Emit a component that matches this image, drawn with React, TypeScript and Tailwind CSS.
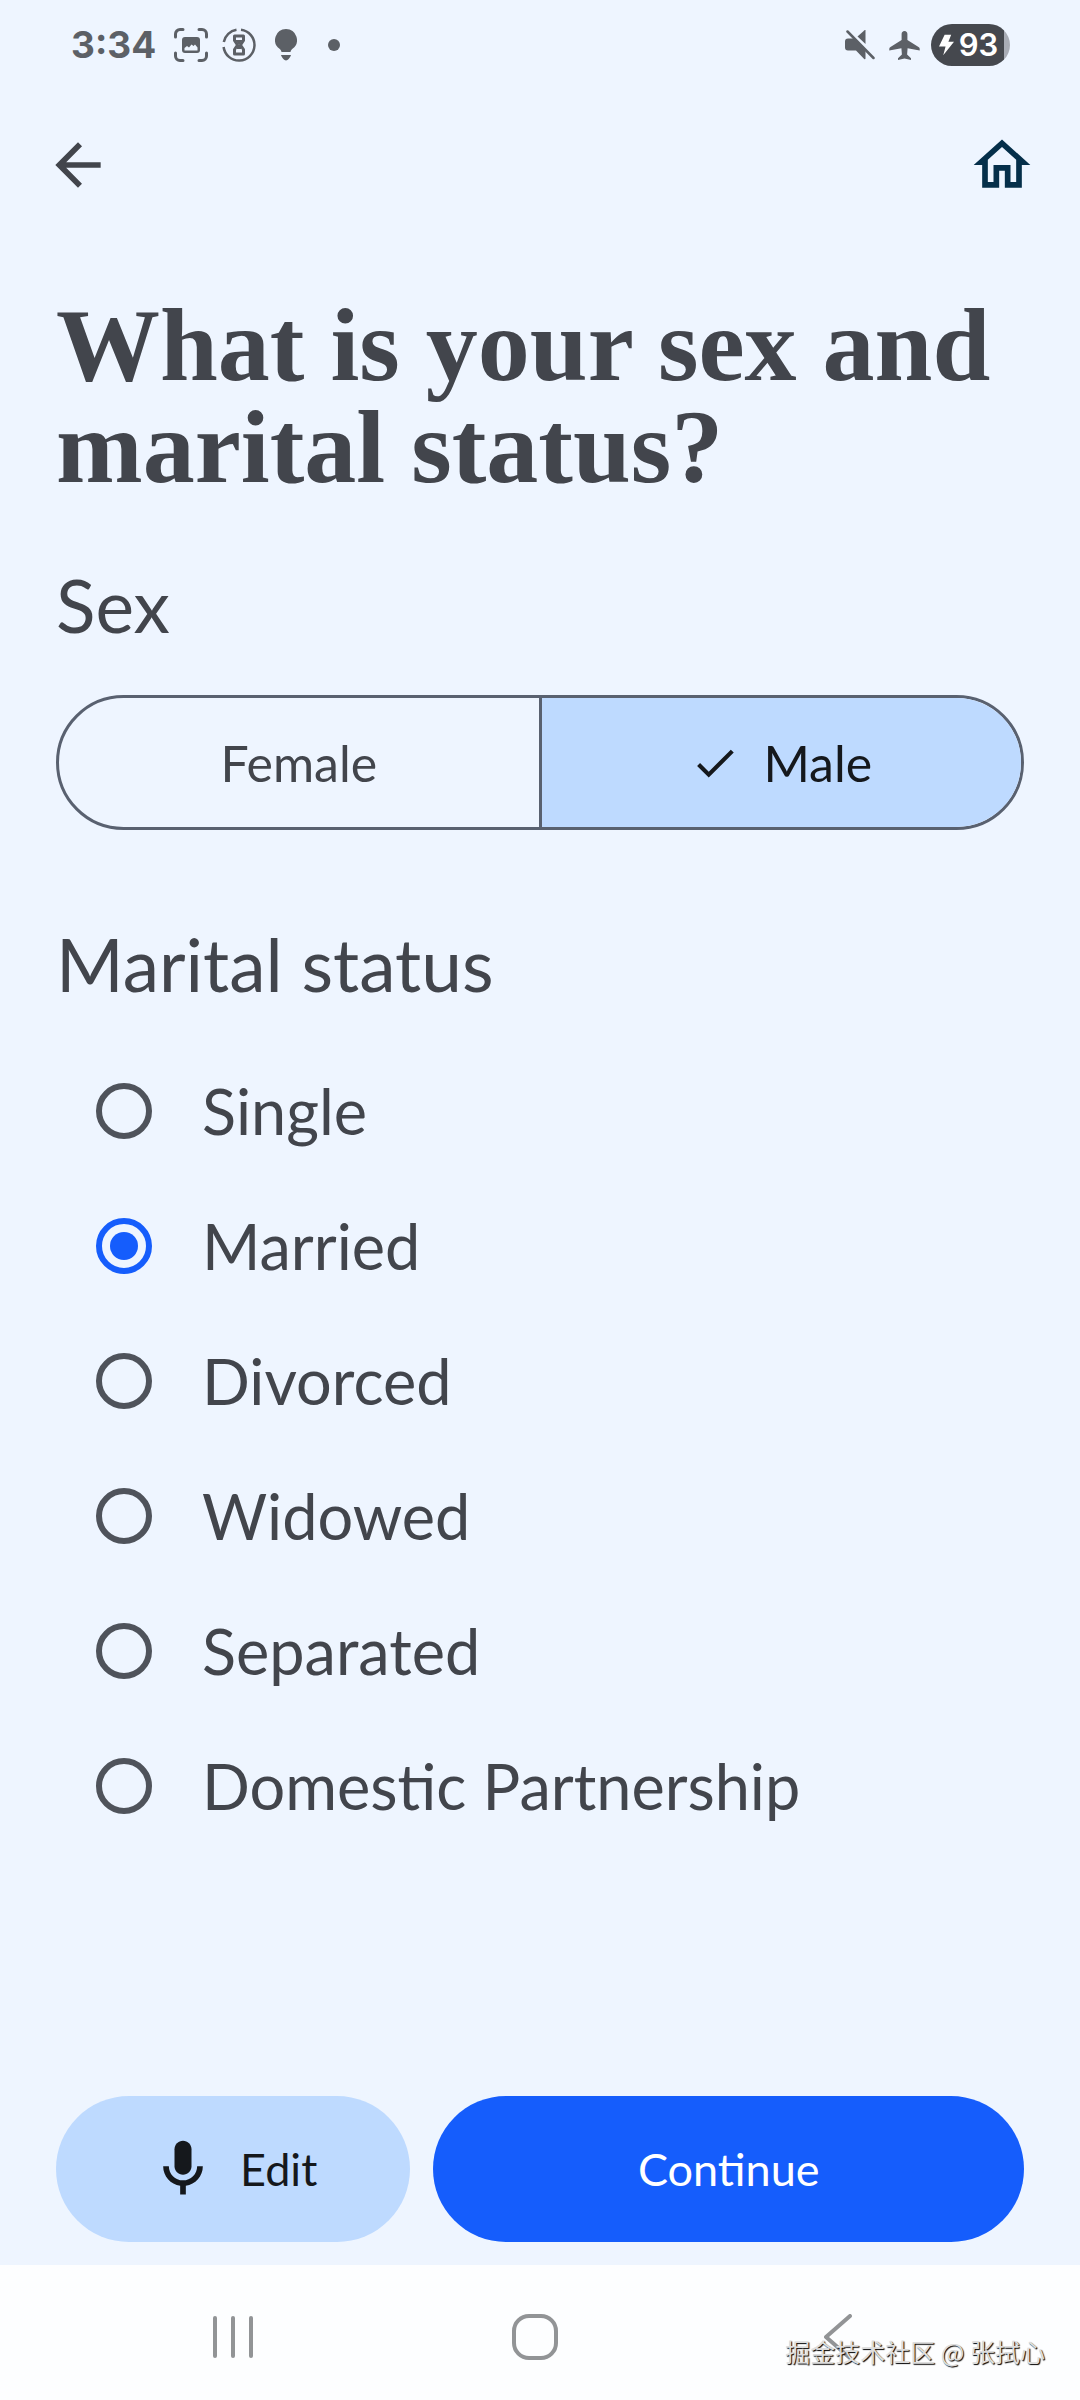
import { useState } from "react";

const maritalOptions = ["Single", "Married", "Divorced", "Widowed", "Separated", "Domestic Partnership"];

function StatusBar() {
  return (
    <div className="flex h-[90px] items-center justify-between pr-[70px] pl-[71px] font-['Inter'] text-[#5c6066]">
      <div className="flex items-center">
        <span className="text-[37px] leading-[46px] font-bold">3:34</span>
        <svg className="ml-[18px] size-[34px]" viewBox="0 0 34 34" fill="none" stroke="currentColor" strokeWidth="3" strokeLinecap="round" aria-hidden="true">
          <path d="M1.500 9V6a4.500 4.500 0 0 1 4.500-4.500h3M25 1.500h3A4.500 4.500 0 0 1 32.500 6v3M32.500 25v3a4.500 4.500 0 0 1-4.500 4.500h-3M9 32.500H6A4.500 4.500 0 0 1 1.500 28v-3" />
          <rect x="8" y="9" width="18" height="16" rx="3" fill="currentColor" stroke="none" />
          <path d="M10.500 22.500v-2.500l2.500-2 2 1.500 2.500-3 2 1.500 1.500-1.500 2.500 3v3z" fill="#eef5ff" stroke="none" />
        </svg>
        <svg className="ml-[14px] size-[34px]" viewBox="0 0 34 34" fill="none" stroke="currentColor" strokeWidth="2.500" aria-hidden="true">
          <path d="M19 1.700A15.500 15.500 0 1 1 1.600 19M1.800 14A15.500 15.500 0 0 1 14.500 1.800" />
          <path d="M12.500 8h9v4.500L18.500 17l3 4.500V26h-9v-4.500l3-4.500-3-4.500z" strokeWidth="3" strokeLinejoin="round" />
          <path d="M13 12h8l-4 5zM15 17h4v4h-4z" fill="currentColor" stroke="none" />
        </svg>
        <svg className="ml-[19px] h-[32px] w-[22px]" viewBox="0 0 22 32" fill="currentColor" aria-hidden="true">
          <path d="M11 0a11 11 0 0 0-6.500 19.800c1.200 1 1.700 1.800 2 3.200h9c.3-1.400.8-2.200 2-3.200A11 11 0 0 0 11 0zM6.500 26h9c.4 0 .5.400.3.700C14.500 29 13 31.500 11 31.500S7.500 29 6.200 26.700c-.2-.3-.1-.7.3-.7z" />
        </svg>
        <span className="ml-[31px] size-3 rounded-full bg-current" />
      </div>
      <div className="flex items-center">
        <svg className="h-[30px] w-[30px]" viewBox="0 0 30 30" fill="currentColor" aria-hidden="true">
          <path d="M20.500 .500V14L12.500 6.500 19.500 .300c.5-.4 1-.3 1 .2z" />
          <path d="M3 8.500h5.500L20.500 20.500V28.500c0 .7-.7.900-1.300.4L11 20.500H3a3 3 0 0 1-3-3v-6a3 3 0 0 1 3-3z" />
          <path d="M2.500 1.500l26 26.500" fill="none" stroke="currentColor" strokeWidth="2.500" strokeLinecap="round" />
        </svg>
        <svg className="ml-[14px] size-[31px]" viewBox="0 0 31 31" fill="currentColor" aria-hidden="true">
          <path d="M15.500 1c1.800 0 2.900 1.400 2.900 3v6L29.500 17c.8.5 1.200 1 1.200 1.700v1.800L18.600 18.300l-.5 6.200 3.900 3.700v1.800l-6.500-1.500L9 30v-1.800l3.900-3.700-.5-6.200L.3 20.500v-1.800c0-.7.4-1.200 1.200-1.700l11.100-7V4c0-1.600 1.100-3 2.900-3z" />
        </svg>
        <div className="ml-[11px] flex h-[42px] w-[79px] items-center justify-center overflow-hidden rounded-full bg-linear-to-r from-[#45484e] from-92% to-[#a9adb6] to-92% pr-1 text-white">
          <svg className="h-[22px] w-[15px]" viewBox="0 0 16 22" fill="currentColor" aria-hidden="true">
            <path d="M6 0h7l-3 7.500h6L4.500 22 7 12.500H0z" />
          </svg>
          <span className="ml-[5px] text-[31px] leading-[42px] font-semibold">93</span>
        </div>
      </div>
    </div>
  );
}

function TopBar() {
  return (
    <header className="flex h-[150px] items-center justify-between px-11">
      <button type="button" aria-label="Back" className="text-[#42454c]">
        <svg className="size-[68px]" viewBox="0 0 24 24" fill="currentColor">
          <path d="M20 11H7.830l5.590-5.590L12 4l-8 8 8 8 1.410-1.410L7.830 13H20v-2z" />
        </svg>
      </button>
      <button type="button" aria-label="Home" className="text-[#052f4a]">
        <svg className="size-[68px]" viewBox="0 0 24 24" fill="currentColor">
          <path d="M12 5.690l5 4.500V18h-2v-6H9v6H7v-7.810l5-4.500M12 3L2 12h3v8h6v-6h2v6h6v-8h3L12 3z" />
        </svg>
      </button>
    </header>
  );
}

function SexToggle() {
  const [sex, setSex] = useState("Male");
  return (
    <div role="group" aria-labelledby="sex-title" className="mt-[47px] flex h-[135px] overflow-hidden rounded-full border-[3px] border-[#596170]">
      {["Female", "Male"].map((option) => (
        <button
          key={option}
          type="button"
          aria-pressed={sex === option}
          onClick={() => setSex(option)}
          className="flex flex-1 items-center justify-center gap-[23px] text-[50px] leading-[60px] text-[#42454c] not-first:border-l-[3px] not-first:border-[#596170] aria-pressed:bg-[#bedaff] aria-pressed:text-[#15181c]"
        >
          {sex === option && (
            <svg className="size-[50px]" viewBox="0 0 24 24" fill="currentColor" aria-hidden="true">
              <path d="M9 16.170L4.830 12l-1.420 1.410L9 19 21 7l-1.410-1.410z" />
            </svg>
          )}
          {option}
        </button>
      ))}
    </div>
  );
}

function MaritalStatus() {
  const [status, setStatus] = useState("Married");
  return (
    <div role="radiogroup" aria-labelledby="marital-title" className="mt-9 flex flex-col pl-10">
      {maritalOptions.map((option) => (
        <label key={option} className="flex h-[135px] items-center gap-[50px] text-[63px] leading-[74px]">
          <input
            type="radio"
            name="marital"
            checked={status === option}
            onChange={() => setStatus(option)}
            className="grid size-14 shrink-0 appearance-none place-items-center rounded-full border-[6px] border-[#4f535b] before:size-7 before:rounded-full checked:border-[#155dfc] checked:before:bg-[#155dfc]"
          />
          {option}
        </label>
      ))}
    </div>
  );
}

function NavigationBar() {
  return (
    <nav className="relative grid h-[135px] grid-cols-3 bg-[#fdfeff] pr-[91px] pl-[82px] text-[#929496]">
      <button type="button" aria-label="Recent apps" className="flex items-center justify-center gap-[14px] pt-2">
        <span className="h-[42px] w-1 rounded-full bg-current" />
        <span className="h-[42px] w-1 rounded-full bg-current" />
        <span className="h-[42px] w-1 rounded-full bg-current" />
      </button>
      <button type="button" aria-label="Home screen" className="flex items-center justify-center pt-2">
        <span className="size-[46px] rounded-[17px] border-4 border-current" />
      </button>
      <button type="button" aria-label="Go back" className="flex items-center justify-center pt-2">
        <svg className="h-[46px] w-[28px]" viewBox="0 0 28 46" fill="none" stroke="currentColor" strokeWidth="4" strokeLinecap="round" strokeLinejoin="round">
          <path d="M26 2L2 23l24 21" />
        </svg>
      </button>
      <span className="absolute right-[35px] bottom-[31px] font-['Noto_Sans_CJK_SC',sans-serif] text-[25px] leading-[36px] whitespace-nowrap text-[#dddddd] [text-shadow:1px_1px_1px_#000000]">
        掘金技术社区 @ 张拭心
      </span>
    </nav>
  );
}

export default function App() {
  return (
    <div className="flex min-h-screen flex-col bg-[#eef5ff] font-['Lato',sans-serif] text-[#42454c]">
      <StatusBar />
      <TopBar />
      <main className="flex flex-1 flex-col px-14 pt-[54px]">
        <h1 className="font-['Liberation_Serif',serif] text-[104px] leading-[102px] font-bold">
          What is your sex and marital status?
        </h1>
        <h2 id="sex-title" className="mt-16 text-[73px] leading-[86px]">Sex</h2>
        <SexToggle />
        <h2 id="marital-title" className="mt-[91px] text-[73px] leading-[86px]">Marital status</h2>
        <MaritalStatus />
      </main>
      <footer className="flex gap-[23px] px-14 pb-[23px] text-[45px] leading-[52px]">
        <button type="button" className="flex h-[146px] flex-3 items-center justify-center gap-[23px] rounded-full bg-[#bedaff] text-[#15181c]">
          <svg className="size-[68px]" viewBox="0 0 24 24" fill="currentColor" aria-hidden="true">
            <path d="M12 14c1.660 0 3-1.340 3-3V5c0-1.660-1.340-3-3-3S9 3.340 9 5v6c0 1.660 1.340 3 3 3z" />
            <path d="M17 11c0 2.760-2.240 5-5 5s-5-2.240-5-5H5c0 3.530 2.610 6.430 6 6.920V21h2v-3.080c3.390-.490 6-3.390 6-6.920h-2z" />
          </svg>
          Edit
        </button>
        <button type="button" className="h-[146px] flex-5 rounded-full bg-[#155dfc] text-white">Continue</button>
      </footer>
      <NavigationBar />
    </div>
  );
}
